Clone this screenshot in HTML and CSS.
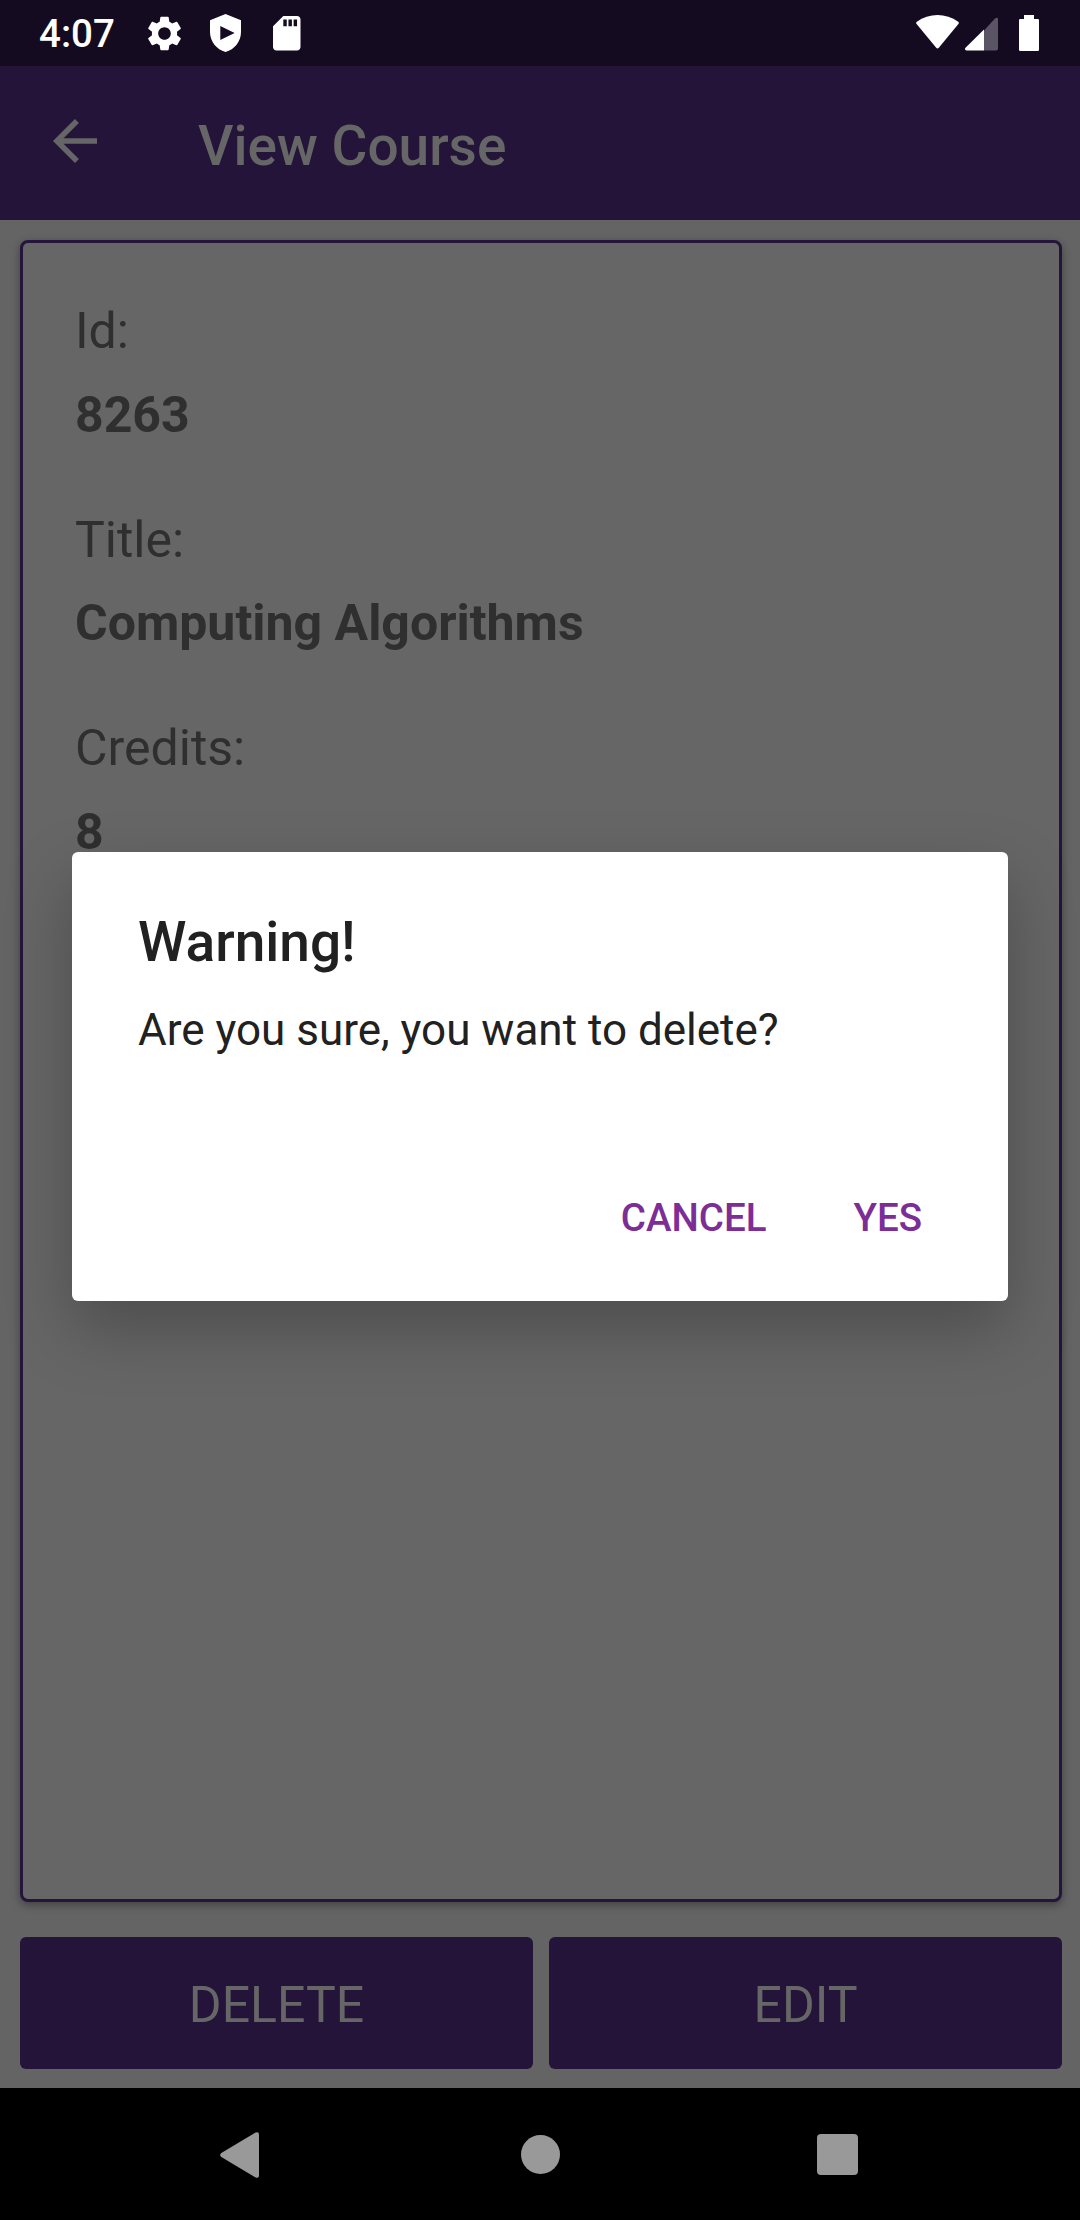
FILE: index.html
```html
<!DOCTYPE html>
<html lang="en">
<head>
<meta charset="utf-8">
<title>View Course</title>
<link rel="stylesheet" href="styles.css">
</head>
<body>
<div class="screen">
  <header class="status">
    <span class="clock">4:07</span>
    <svg class="gear" viewBox="2 2 20 20"><path d="M19.14 12.94c.04-.3.06-.61.06-.94 0-.32-.02-.64-.07-.94l2.03-1.58a.49.49 0 0 0 .12-.61l-1.92-3.32a.488.488 0 0 0-.59-.22l-2.39.96c-.5-.38-1.03-.7-1.62-.94l-.36-2.54a.484.484 0 0 0-.48-.41h-3.84c-.24 0-.43.17-.47.41l-.36 2.54c-.59.24-1.13.57-1.62.94l-2.39-.96c-.22-.08-.47 0-.59.22L2.74 8.87c-.12.21-.08.47.12.61l2.03 1.58c-.05.3-.09.63-.09.94s.02.64.07.94l-2.03 1.58a.49.49 0 0 0-.12.61l1.92 3.32c.12.22.37.29.59.22l2.39-.96c.5.38 1.03.7 1.62.94l.36 2.54c.05.24.24.41.48.41h3.84c.24 0 .44-.17.47-.41l.36-2.54c.59-.24 1.13-.56 1.62-.94l2.39.96c.22.08.47 0 .59-.22l1.92-3.32c.12-.22.07-.47-.12-.61l-2.01-1.58zM12 15.6c-1.98 0-3.6-1.62-3.6-3.6s1.62-3.6 3.6-3.6 3.6 1.62 3.6 3.6-1.62 3.6-3.6 3.6z"/></svg>
    <svg class="shield" viewBox="0 0 31 38"><path fill-rule="evenodd" d="M15.5 0 31 6.3V18c0 9.500-6.500 17.500-15.500 20C6.500 35.500 0 27.500 0 18V6.300zM10.300 12v14L24.600 19z"/></svg>
    <svg class="sd" viewBox="4 2 16 20"><path d="M18 2h-8L4.020 8 4 20c0 1.100.900 2 2 2h12c1.100 0 2-.900 2-2V4c0-1.100-.900-2-2-2zm-6 6h-2V4h2v4zm3 0h-2V4h2v4zm3 0h-2V4h2v4z"/></svg>
    <span class="spacer"></span>
    <svg class="wifi" viewBox="0 0 43 34"><path d="M.8 6.800C13-2.100 30-2.100 42.200 6.800q1.200 1 .2 2.300L22.800 32.800q-1.300 1.400-2.600 0L.6 9.100q-1-1.300.2-2.300z"/></svg>
    <svg class="signal" viewBox="0 0 33 34"><path opacity=".3" d="M19 13.500 30.200 1.200Q33 0 33 2v29.500q0 2-2 2H19z"/><path d="M19 12.500v21H1.500q-2.500-.5-1-2.800z"/></svg>
    <svg class="battery" viewBox="0 0 20 36"><path d="M5 0h10v4h3.800Q20 4 20 5.200v29.600q0 1.200-1.200 1.200H1.200Q0 36 0 34.800V5.200Q0 4 1.200 4H5z"/></svg>
  </header>
  <div class="appbar">
    <svg class="back" viewBox="0 0 24 24"><path d="M20 11H7.830l5.590-5.590L12 4l-8 8 8 8 1.410-1.410L7.830 13H20v-2z"/></svg>
    <h1 class="title">View Course</h1>
  </div>
  <main class="content">
    <section class="card">
      <div class="field"><span class="label">Id:</span><span class="value">8263</span></div>
      <div class="field"><span class="label">Title:</span><span class="value">Computing Algorithms</span></div>
      <div class="field"><span class="label">Credits:</span><span class="value">8</span></div>
    </section>
    <div class="buttons">
      <button class="button">DELETE</button>
      <button class="button">EDIT</button>
    </div>
  </main>
  <nav class="navbar">
    <svg class="nav-back" viewBox="0 0 39 46"><path d="M1.300 21 35.600.6Q39-.8 39 2.500v41q0 3.300-3.400 1.900L1.300 25q-2.300-2 0-4z"/></svg>
    <span class="nav-home"></span>
    <span class="nav-recent"></span>
  </nav>
  <div class="dialog" role="alertdialog">
    <h2 class="dialog-title">Warning!</h2>
    <p class="dialog-message">Are you sure, you want to delete?</p>
    <div class="dialog-actions">
      <button class="action">CANCEL</button>
      <button class="action">YES</button>
    </div>
  </div>
</div>
</body>
</html>
```
FILE: styles.css
```css
* { box-sizing: border-box; }
body { margin: 0; font-family: Roboto, sans-serif; }
h1, h2, p { margin: 0; font-weight: 400; }
button { border: 0; padding: 0; background: none; font-family: inherit; }
svg { display: block; flex: none; fill: currentColor; }

.screen {
  position: relative;
  display: flex;
  flex-direction: column;
  width: 1080px;
  height: 2220px;
  background: #646464;
  overflow: hidden;
}

.status {
  display: flex;
  align-items: center;
  height: 66px;
  padding: 2px 41px 0 39px;
  background: #150b21;
  color: #fff;
}
.clock { width: 108px; font-size: 38.5px; font-weight: 500; line-height: 66px; }
.gear { width: 35px; height: 35px; margin-right: 28px; margin-top: -1px; }
.shield { width: 31px; height: 38px; margin-right: 32px; margin-top: -2px; }
.sd { width: 27.500px; height: 34.400px; margin-top: -1px; }
.spacer { flex: 1; }
.wifi { width: 43px; height: 34px; margin-right: 6px; margin-top: -4px; }
.signal { width: 33px; height: 34px; margin-right: 21px; margin-top: -1px; }
.battery { width: 20px; height: 36px; margin-top: -2px; }

.appbar {
  display: flex;
  align-items: center;
  height: 154px;
  padding-left: 42px;
  background: #25143a;
  color: #666;
}
.back { width: 66px; height: 66px; margin: 0 90px 4px 0; }
.title { padding-top: 6px; font-size: 55px; font-weight: 500; line-height: 66px; }

.content {
  display: flex;
  flex-direction: column;
  gap: 35px;
  height: 1868px;
  padding: 20px 18px 19px 20px;
}
.card {
  flex: 1;
  display: flex;
  flex-direction: column;
  gap: 41.500px;
  padding: 47px 52px;
  border: 3px solid #25143c;
  border-radius: 8px;
  background: #666;
  box-shadow: 0 3px 8px rgba(0, 0, 0, .35);
  color: #2f2f2f;
  font-size: 50px;
  line-height: 83.500px;
}
.field { display: flex; flex-direction: column; }
.value { font-weight: 700; }

.buttons { display: flex; gap: 16px; height: 132px; }
.button {
  flex: 1;
  padding-top: 4px;
  border-radius: 6px;
  background: #25143a;
  color: #666;
  font-size: 50px;
  line-height: 128px;
}

.navbar {
  display: flex;
  align-items: center;
  height: 132px;
  padding: 1px 0 0 220px;
  background: #000;
  color: #999;
}
.nav-back { width: 39px; height: 46px; margin-right: 262px; }
.nav-home { width: 39px; height: 39px; margin-right: 257px; border-radius: 50%; background: #999; }
.nav-recent { width: 41px; height: 41px; border-radius: 4px; background: #999; }

.dialog {
  position: absolute;
  top: 852px;
  left: 72px;
  display: flex;
  flex-direction: column;
  width: 936px;
  height: 449px;
  padding: 57px 66px 50px;
  border-radius: 6px;
  background: #fff;
  box-shadow: 0 28px 66px rgba(0, 0, 0, .25);
  color: #212121;
}
.dialog-title { font-size: 55px; font-weight: 500; line-height: 66px; }
.dialog-message { margin-top: 25px; font-size: 44px; line-height: 60px; }
.dialog-actions {
  display: flex;
  justify-content: flex-end;
  gap: 87px;
  margin-top: auto;
  padding-right: 20px;
}
.action { color: #7c2e96; font-size: 38.500px; font-weight: 500; line-height: 66px; }
```
